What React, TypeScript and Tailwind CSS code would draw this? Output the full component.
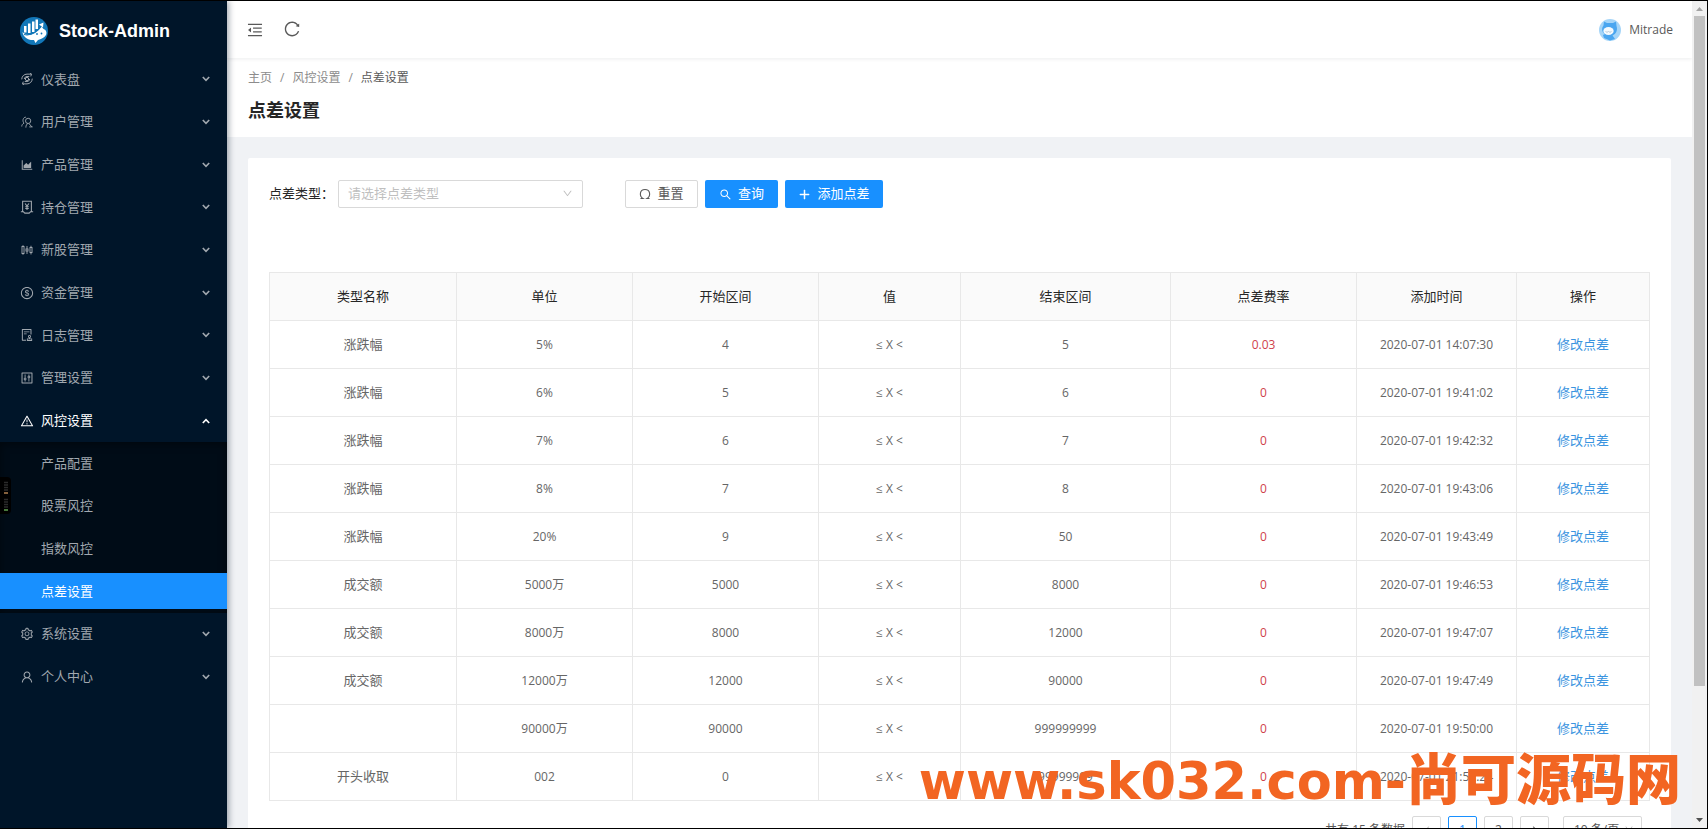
import React from 'react';
import {
  AiOutlineMenuFold,
  AiOutlineReload,
  AiOutlineSearch,
  AiOutlinePlus,
  AiOutlineAreaChart,
  AiOutlineSliders,
  AiOutlineDollarCircle,
  AiOutlineAudit,
  AiOutlineControl,
  AiOutlineWarning,
  AiOutlineSetting,
  AiOutlineUser,
  AiOutlineDown,
  AiOutlineLeft,
  AiOutlineRight,
} from 'react-icons/ai';

interface MenuEntry {
  label: string;
  icon: React.ReactNode;
}

const DashboardIcon = () => (
  <svg viewBox="0 0 16 16" className="w-3 h-3" fill="none" stroke="currentColor" strokeWidth="1.3">
    <circle cx="8" cy="8" r="2.2" />
    <path d="M1 8.500C1 4.500 4 1.500 8 1.500h6M15 7.500c0 4-3 7-7 7H2M12 0l2 1.500-1 3M4 16l-2-1.500 1-3M4.500 8C4.500 6 6 4.700 8 4.700h3M11.500 8c0 2-1.500 3.300-3.500 3.300H5" />
  </svg>
);

const UsersIcon = () => (
  <svg viewBox="0 0 16 16" className="w-3 h-3" fill="none" stroke="currentColor" strokeWidth="1.2">
    <circle cx="9.500" cy="6.500" r="3.500" />
    <path d="M1 14c0-2 1-3.500 3-4.500C1.500 7 2.500 1.500 6.500 1.500M6.500 15.500C6.500 12.500 7.500 11 9 10M10.500 10l4 4.500M11 14.500h4.500" />
  </svg>
);

const HoldingIcon = () => (
  <svg viewBox="0 0 16 16" className="w-3.5 h-3.5" fill="none" stroke="currentColor" strokeWidth="1.2">
    <path d="M3 13V1.500h10V13M1 13.500h3l1.500 1.500h5l1.500-1.500h3" />
    <path d="M5.800 4L8 7l2.200-3M8 7v4.500M6 7.800h4M6 9.700h4" />
  </svg>
);

const topMenu: MenuEntry[] = [
  { label: '仪表盘', icon: <DashboardIcon /> },
  { label: '用户管理', icon: <UsersIcon /> },
  { label: '产品管理', icon: <AiOutlineAreaChart /> },
  { label: '持仓管理', icon: <HoldingIcon /> },
  { label: '新股管理', icon: <AiOutlineSliders /> },
  { label: '资金管理', icon: <AiOutlineDollarCircle /> },
  { label: '日志管理', icon: <AiOutlineAudit /> },
  { label: '管理设置', icon: <AiOutlineControl /> },
];

const subMenu = ['产品配置', '股票风控', '指数风控', '点差设置'];

const bottomMenu: MenuEntry[] = [
  { label: '系统设置', icon: <AiOutlineSetting /> },
  { label: '个人中心', icon: <AiOutlineUser /> },
];

const rows = [
  ['涨跌幅', '5%', '4', '5', '0.03', '2020-07-01 14:07:30'],
  ['涨跌幅', '6%', '5', '6', '0', '2020-07-01 19:41:02'],
  ['涨跌幅', '7%', '6', '7', '0', '2020-07-01 19:42:32'],
  ['涨跌幅', '8%', '7', '8', '0', '2020-07-01 19:43:06'],
  ['涨跌幅', '20%', '9', '50', '0', '2020-07-01 19:43:49'],
  ['成交额', '5000万', '5000', '8000', '0', '2020-07-01 19:46:53'],
  ['成交额', '8000万', '8000', '12000', '0', '2020-07-01 19:47:07'],
  ['成交额', '12000万', '12000', '90000', '0', '2020-07-01 19:47:49'],
  ['', '90000万', '90000', '999999999', '0', '2020-07-01 19:50:00'],
  ['开头收取', '002', '0', '99999999', '0', '2020-07-01 21:52:24'],
];

const columns = [
  { title: '类型名称', width: 'w-[187px]' },
  { title: '单位', width: 'w-[176px]' },
  { title: '开始区间', width: 'w-[186px]' },
  { title: '值', width: 'w-[142px]' },
  { title: '结束区间', width: 'w-[210px]' },
  { title: '点差费率', width: 'w-[186px]' },
  { title: '添加时间', width: 'w-[160px]' },
  { title: '操作', width: 'w-[133px]' },
];

const Chevron = ({ up = false }: { up?: boolean }) => (
  <svg viewBox="0 0 8 6" className="ml-auto w-2 h-1.5" fill="none" stroke="currentColor" strokeWidth="1.6">
    <path d={up ? 'M0.8 5L4 1.600l3.200 3.400' : 'M0.8 1L4 4.400 7.200 1'} />
  </svg>
);

const MenuItem = ({ label, icon, open = false }: MenuEntry & { open?: boolean }) => (
  <button
    type="button"
    className={
      open
        ? 'flex items-center w-full pl-5 pr-[17px] text-white'
        : 'flex items-center w-full pl-5 pr-[17px] text-[#a1a8af]'
    }
  >
    <span className="flex justify-center w-3.5 mr-[7px] text-sm">{icon}</span>
    {label}
    <Chevron up={open} />
  </button>
);

const Logo = () => (
  <svg viewBox="0 0 28 28" className="w-7 h-7">
    <circle cx="14" cy="14" r="14" fill="#1277b8" />
    <path d="M2.500 15c3 3 7 3.500 11 1.500 4-2 6-5 8-7l2 2.500c3 1 3.500 4 2.500 6-2 3-5 4-8 5l-2.500 3-1.500-3C8 23.500 3 20 2.500 15z" fill="#fff" />
    <path d="M4 9h2.500v6.500H4zM8 6.500h2.500V16H8zM12 4.500h2.500V15H12zM15.500 2.500H18V12h-2.500z" fill="#fff" />
    <path d="M4 17.500c8 1.500 13-2 18-9" fill="none" stroke="#1277b8" strokeWidth="1.2" />
    <path d="M19 7.500l4.500-2-0.500 5z" fill="#fff" />
    <circle cx="17" cy="17" r="0.9" fill="#1277b8" />
    <circle cx="21.500" cy="16.500" r="0.9" fill="#1277b8" />
  </svg>
);

const Avatar = () => (
  <svg viewBox="0 0 22 22" className="w-[22px] h-[22px]">
    <circle cx="11" cy="11" r="11" fill="#a5d5f8" />
    <path d="M5 2.500l3 1.500h6l3-1.500 0.500 4.500c1.500 4-0.500 8-4 9.500l2.500 3.500-5 1.500-6-2.500-1-3 2-1C2.500 13 2.500 9 4.500 6.500z" fill="#4aa6f0" />
    <ellipse cx="9.500" cy="12" rx="5.200" ry="4" fill="#f4fafe" />
    <path d="M6.500 12.500l1.500 0.800 1.500-0.800 1.500 0.800 1.500-0.800" stroke="#a9bccb" strokeWidth="0.8" fill="none" />
  </svg>
);

const MeterLevel = ({ color }: { color: string }) => (
  <svg viewBox="0 0 4 13" className="w-1 h-[13px]">
    <path d="M0 1.500h4M0 4h4M0 6.500h4M0 9h4" stroke="#2b2b2b" strokeWidth="1.5" />
    <path d="M0 12h4" stroke={color} strokeWidth="1.5" />
  </svg>
);

const Sidebar = () => (
  <aside className="relative z-20 shrink-0 w-[227px] bg-[#001529] shadow-[2px_0_6px_rgba(0,21,41,0.35)] text-[13px]">
    <div className="flex items-center h-[57px] pl-5 pt-0.5 gap-[11px]">
      <Logo />
      <h1 className="font-['Liberation_Sans',sans-serif] text-lg font-bold text-white">Stock-Admin</h1>
    </div>
    <nav className="grid auto-rows-fr h-[640px]">
      {topMenu.map((item) => (
        <MenuItem key={item.label} {...item} />
      ))}
      <MenuItem label="风控设置" icon={<AiOutlineWarning />} open />
      <ul className="row-span-4 grid auto-rows-fr items-center bg-[#000c17] shadow-[inset_0_2px_8px_rgba(0,0,0,0.45)]">
        {subMenu.map((label) => (
          <li key={label}>
            <a
              href="#"
              className={
                label === '点差设置'
                  ? 'flex items-center h-9 pl-[41px] bg-[#1890ff] text-white'
                  : 'flex items-center h-9 pl-[41px] text-[#a1a8af]'
              }
            >
              {label}
            </a>
          </li>
        ))}
      </ul>
      {bottomMenu.map((item) => (
        <MenuItem key={item.label} {...item} />
      ))}
    </nav>
    {/* level meter docked on the left edge */}
    <div className="absolute left-0 top-[476px] flex flex-col items-center justify-center gap-1 w-[11px] h-[37px] rounded-r-sm bg-black">
      <MeterLevel color="#b08050" />
      <MeterLevel color="#60a050" />
    </div>
  </aside>
);

const FilterBar = () => (
  <form className="flex items-center h-7 text-[13px]">
    <label htmlFor="spread-type" className="w-[69px] text-[#262626]">
      点差类型：
    </label>
    <div className="relative mr-[42px]">
      <select
        id="spread-type"
        defaultValue=""
        className="block appearance-none w-[245px] h-7 pl-[9px] rounded-xs border border-[#d9d9d9] bg-white text-[#bfbfbf]"
      >
        <option value="">请选择点差类型</option>
      </select>
      <AiOutlineDown className="absolute right-2.5 top-2 text-[11px] text-[#bfbfbf] pointer-events-none" />
    </div>
    <div className="flex gap-[7px]">
      <button
        type="button"
        className="flex items-center justify-center gap-1.5 w-[73px] h-7 rounded-xs border border-[#d9d9d9] text-[#595959]"
      >
        <svg viewBox="0 0 12 12" className="w-3 h-3" fill="none" stroke="currentColor" strokeWidth="1.1">
          <path d="M1.500 10.500H4C0 8 0.500 1.500 6 1.500S12 8 8 10.500h2.500" />
        </svg>
        重置
      </button>
      <button
        type="button"
        className="flex items-center justify-center gap-1.5 w-[73px] h-7 rounded-xs bg-[#1890ff] text-white"
      >
        <AiOutlineSearch />
        查询
      </button>
      <button
        type="button"
        className="flex items-center justify-center gap-1.5 w-[98px] h-7 rounded-xs bg-[#1890ff] text-white"
      >
        <AiOutlinePlus className="stroke-[40]" />
        添加点差
      </button>
    </div>
  </form>
);

const SpreadTable = () => (
  <table className="w-full mt-16 table-fixed border-collapse text-center text-[#666666]">
    <thead>
      <tr className="h-12 bg-[#fafafa] text-[13px] text-[#262626]">
        {columns.map((col) => (
          <th key={col.title} className={`${col.width} border border-[#e8e8e8] font-normal`}>
            {col.title}
          </th>
        ))}
      </tr>
    </thead>
    <tbody>
      {rows.map(([name, unit, start, end, rate, time]) => (
        <tr key={time} className="h-12">
          <td className="border border-[#e8e8e8] text-[13px]">{name}</td>
          <td className="border border-[#e8e8e8]">{unit}</td>
          <td className="border border-[#e8e8e8]">{start}</td>
          <td className="border border-[#e8e8e8]">≤ X &lt;</td>
          <td className="border border-[#e8e8e8]">{end}</td>
          <td className="border border-[#e8e8e8] text-[#cf3f4c]">{rate}</td>
          <td className="border border-[#e8e8e8]">{time}</td>
          <td className="border border-[#e8e8e8] text-[13px]">
            <a href="#" className="text-[#3a94e0]">修改点差</a>
          </td>
        </tr>
      ))}
    </tbody>
  </table>
);

const Pagination = () => (
  <div className="flex items-center justify-end mt-[15px] pr-[7px] gap-[7px] text-[#595959]">
    <span>共有 15 条数据</span>
    <button type="button" aria-label="上一页" className="flex items-center justify-center w-[29px] h-7 rounded-xs border border-[#d9d9d9] text-[#bfbfbf]">
      <AiOutlineLeft className="text-[10px]" />
    </button>
    <button type="button" className="w-[29px] h-7 rounded-xs border border-[#1890ff] text-[#1890ff]">1</button>
    <button type="button" className="w-[29px] h-7 rounded-xs border border-[#d9d9d9]">2</button>
    <button type="button" aria-label="下一页" className="flex items-center justify-center w-[29px] h-7 rounded-xs border border-[#d9d9d9]">
      <AiOutlineRight className="text-[10px]" />
    </button>
    <div className="relative ml-[7px]">
      <select aria-label="每页条数" className="block appearance-none w-[79px] h-7 pl-2.5 rounded-xs border border-[#d9d9d9] bg-white">
        <option>10 条/页</option>
      </select>
      <AiOutlineDown className="absolute right-2 top-2 text-[10px] text-[#bfbfbf] pointer-events-none" />
    </div>
  </div>
);

const ScrollBar = () => (
  <div className="flex flex-col items-center shrink-0 w-[15px] bg-[#f1f1f1]">
    <svg viewBox="0 0 15 15" className="w-[15px] h-[15px]">
      <path d="M4 10l3.500-4L11 10z" fill="#a3a3a3" />
    </svg>
    <div className="w-[11px] h-[81%] bg-[#c1c1c1]" />
    <svg viewBox="0 0 15 15" className="w-[15px] h-[15px] mt-auto">
      <path d="M4 5l3.500 4L11 5z" fill="#505050" />
    </svg>
  </div>
);

export default function App() {
  return (
    <div className="relative flex h-screen overflow-hidden border-t border-r border-b border-black bg-[#f0f2f5] font-['Open_Sans','Noto_Sans_CJK_SC',sans-serif] text-xs">
      <Sidebar />
      <div className="flex-1 min-w-0 overflow-hidden">
        <header className="relative z-10 flex items-center h-[57px] px-[19px] bg-white shadow-[0_1px_4px_rgba(0,21,41,0.08)] text-[#595959]">
          <button type="button" aria-label="收起菜单" className="text-lg">
            <AiOutlineMenuFold />
          </button>
          <button type="button" aria-label="刷新" className="ml-[19px] pb-0.5 text-lg">
            <AiOutlineReload />
          </button>
          <div className="flex items-center gap-2 ml-auto">
            <Avatar />
            <span>Mitrade</span>
          </div>
        </header>
        <div className="h-[79px] px-[21px] pt-2.5 bg-white">
          <nav className="flex gap-2 leading-5 text-[#8c8c8c]">
            <a href="#">主页</a>
            <span>/</span>
            <a href="#">风控设置</a>
            <span>/</span>
            <span className="text-[#595959]">点差设置</span>
          </nav>
          <h2 className="mt-2 text-lg leading-7 font-bold text-[#262626]">点差设置</h2>
        </div>
        <main className="m-[21px] p-[22px] pl-[21px] rounded-xs bg-white">
          <FilterBar />
          <SpreadTable />
          <Pagination />
        </main>
      </div>
      <ScrollBar />
      <div className="absolute right-[26px] bottom-[21px] z-30 flex items-baseline whitespace-nowrap font-['DejaVu_Sans','Noto_Sans_CJK_SC',sans-serif] text-[51px] font-bold leading-none text-[#f26522] pointer-events-none">
        www.sk032.com-
        <span className="font-['Noto_Sans_CJK_SC',sans-serif] text-[55px] leading-none font-black">尚可源码网</span>
      </div>
    </div>
  );
}
